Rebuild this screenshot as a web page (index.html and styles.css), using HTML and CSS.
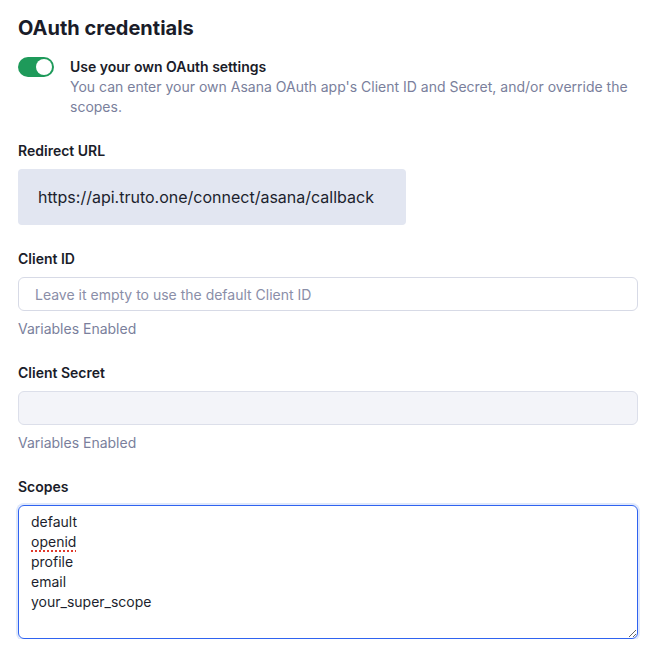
FILE: index.html
```html
<!DOCTYPE html>
<html lang="en">
<head>
<meta charset="utf-8">
<title>OAuth credentials</title>
<link rel="stylesheet" href="styles.css">
</head>
<body>
<main class="panel">
  <h2 class="title">OAuth credentials</h2>
  <div class="toggle-row">
    <span class="switch" role="switch" aria-checked="true"><span class="knob"></span></span>
    <div class="toggle-text">
      <div class="toggle-label">Use your own OAuth settings</div>
      <div class="toggle-desc">You can enter your own Asana OAuth app's Client ID and Secret, and/or override the scopes.</div>
    </div>
  </div>

  <section class="field">
    <div class="label">Redirect URL</div>
    <div class="url-box">https://api.truto.one/connect/asana/callback</div>
  </section>

  <section class="field">
    <div class="label">Client ID</div>
    <input class="input" type="text" placeholder="Leave it empty to use the default Client ID">
    <div class="hint">Variables Enabled</div>
  </section>

  <section class="field">
    <div class="label">Client Secret</div>
    <input class="input input-muted" type="text">
    <div class="hint">Variables Enabled</div>
  </section>

  <section class="field">
    <div class="label">Scopes</div>
    <div class="textarea" role="textbox" aria-multiline="true">
      <div>default</div>
      <div><span class="spell">openid</span></div>
      <div>profile</div>
      <div>email</div>
      <div>your_super_scope</div>
    </div>
  </section>
</main>
</body>
</html>
```
FILE: styles.css
```css
* { box-sizing: border-box; }
html, body { margin: 0; background: #fff; }
body {
  font-family: Inter, "Noto Sans", "Liberation Sans", sans-serif;
  color: #1c1f2e;
}
.panel {
  padding: 14px 21px 0 18px;
  display: flex;
  flex-direction: column;
}
.title {
  margin: 0;
  font-size: 20px;
  line-height: 28px;
  font-weight: 700;
  color: #1a1c29;
}
.toggle-row {
  display: flex;
  gap: 16px;
  margin-top: 15px;
}
.switch {
  flex: none;
  width: 36px;
  height: 20px;
  border-radius: 10px;
  background: #1e9a5a;
  display: flex;
  align-items: center;
  justify-content: flex-end;
  padding: 2px;
}
.knob {
  width: 16px;
  height: 16px;
  border-radius: 50%;
  background: #fff;
}
.toggle-label {
  font-size: 14px;
  line-height: 20px;
  font-weight: 600;
  color: #1a1c29;
}
.toggle-desc {
  font-size: 14px;
  line-height: 20px;
  color: #7a7f9c;
}
.field {
  display: flex;
  flex-direction: column;
  margin-top: 24px;
}
.label {
  font-size: 14px;
  line-height: 20px;
  font-weight: 600;
  color: #1a1c29;
  margin-bottom: 8px;
}
.url-box {
  width: 388px;
  height: 56px;
  background: #e2e6f1;
  border-radius: 4px;
  display: flex;
  align-items: center;
  padding-left: 20px;
  font-size: 16px;
  color: #1c1f2e;
}
.input {
  width: 100%;
  height: 34px;
  border: 1px solid #d7dae6;
  border-radius: 6px;
  padding: 0 16px;
  font-family: inherit;
  font-size: 14px;
  color: #1c1f2e;
  background: #fff;
  outline: none;
}
.input::placeholder { color: #8a8ea8; }
.input-muted { background: #f3f4f9; border-color: #dcdfea; }
.hint {
  margin-top: 8px;
  font-size: 14px;
  line-height: 20px;
  color: #7a7f9c;
}
.textarea {
  width: 100%;
  height: 134px;
  border: 1px solid #2f63f0;
  border-radius: 6px;
  box-shadow: 0 0 0 2px #dfe8fb;
  padding: 6px 12px;
  font-size: 14px;
  line-height: 20px;
  color: #1c1f2e;
  overflow: auto;
  resize: vertical;
}
.spell {
  text-decoration: underline dotted #e0392b;
  text-decoration-thickness: 1.5px;
  text-underline-offset: 3px;
}
```
